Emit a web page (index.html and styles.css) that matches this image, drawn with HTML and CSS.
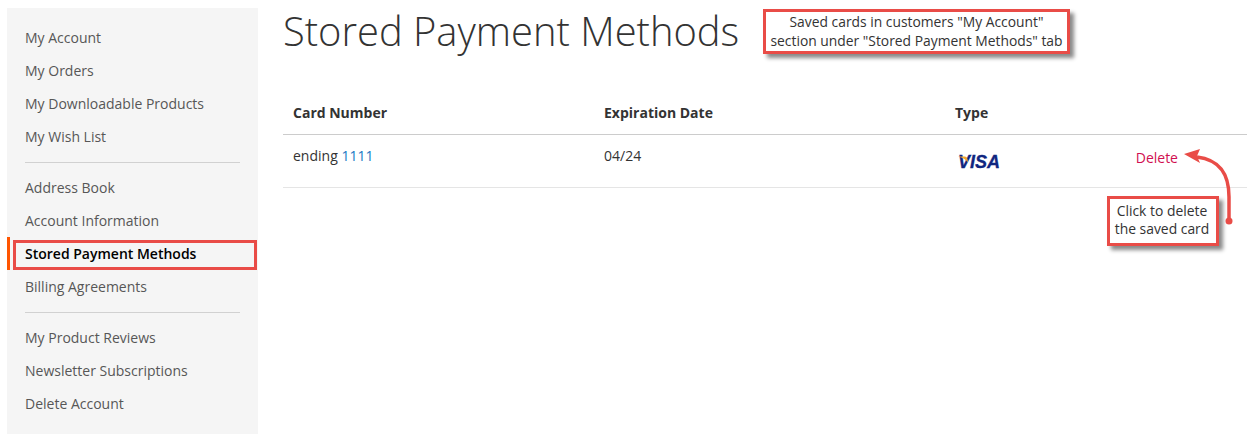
FILE: index.html
```html
<!DOCTYPE html>
<html lang="en">
<head>
  <meta charset="UTF-8" />
  <title>Stored Payment Methods</title>
  <link rel="stylesheet" href="styles.css">
</head>
<body>
  <div class="page">

    <!-- Menu cuenta -->
    <nav class="sidebar">
      <a class="side-link">My Account</a>
      <a class="side-link">My Orders</a>
      <a class="side-link">My Downloadable Products</a>
      <a class="side-link">My Wish List</a>
      <div class="side-divider"></div>
      <a class="side-link">Address Book</a>
      <a class="side-link">Account Information</a>
      <a class="side-link side-current">Stored Payment Methods</a>
      <a class="side-link">Billing Agreements</a>
      <div class="side-divider"></div>
      <a class="side-link">My Product Reviews</a>
      <a class="side-link">Newsletter Subscriptions</a>
      <a class="side-link">Delete Account</a>
    </nav>

    <!-- Contenido -->
    <main class="main">
      <h1 class="page-title">Stored Payment Methods</h1>
      <div class="cards-table">
        <div class="cards-row cards-head">
          <div>Card Number</div>
          <div>Expiration Date</div>
          <div>Type</div>
          <div></div>
        </div>
        <div class="cards-row cards-body">
          <div>ending <span class="card-digits">1111</span></div>
          <div>04/24</div>
          <div class="visa">
            <svg class="visa-flash" width="10" height="7" viewBox="0 0 10 7"><path d="M0 0.5H7Q9 0.5 9.5 3L10 6.5Q7 2 0 0.5Z" fill="#f2a72e"/></svg>
            <span class="visa-text">VISA</span>
          </div>
          <div class="card-actions"><a class="delete-link">Delete</a></div>
        </div>
      </div>
    </main>
  </div>

  <!-- Anotaciones -->
  <div class="note note-saved">Saved cards in customers "My Account"<br>section under "Stored Payment Methods" tab</div>
  <div class="note note-delete">Click to delete<br>the saved card</div>
  <div class="mark-current"></div>
  <svg class="arrow" width="60" height="85" viewBox="0 0 60 85">
    <path d="M46 76V52C46 30 38 15 14 12" fill="none" stroke="#e94c47" stroke-width="3.5"/>
    <path d="M1 9L17 4L14 11L17 18Z" fill="#e94c47"/>
    <circle cx="46" cy="76" r="3.5" fill="#e94c47"/>
  </svg>
</body>
</html>
```

FILE: styles.css
```css
body {
  margin: 0;
  font-family: "Open Sans", sans-serif;
  font-size: 14px;
  color: #333;
  background: #fff;
}

.page {
  display: flex;
  gap: 25px;
  padding: 8px 6px 6px 7px;
  height: 426px;
}

.sidebar {
  width: 251px;
  flex: none;
  box-sizing: border-box;
  padding: 13px 18px 0;
  background: #f5f5f5;
}

.side-link {
  display: block;
  height: 33px;
  line-height: 33px;
  color: #575757;
}

.side-current {
  margin-left: -18px;
  padding-left: 15px;
  border-left: 3px solid #ff5501;
  color: #000;
  font-weight: 600;
}

.side-divider {
  height: 1px;
  margin: 9px 0 8px;
  background: #d1d1d1;
}

.main {
  flex: 1;
}

.page-title {
  margin: 0;
  font-size: 39.9px;
  font-weight: 300;
  line-height: 46px;
}

.cards-table {
  margin-top: 46px;
}

.cards-row {
  display: grid;
  grid-template-columns: 311px 351px 160px 1fr;
  padding: 0 10px;
}

.cards-head {
  height: 34px;
  line-height: 26px;
  font-weight: 700;
  border-bottom: 1px solid #ccc;
}

.cards-body {
  height: 52px;
  line-height: 42px;
  border-bottom: 1px solid #e5e5e5;
}

.card-digits {
  color: #1979c3;
}

.visa {
  position: relative;
  padding-left: 3px;
  line-height: 54px;
}

.visa-flash {
  position: absolute;
  top: 21px;
  left: 3px;
}

.visa-text {
  font-family: "Liberation Sans", sans-serif;
  font-size: 18px;
  font-style: italic;
  font-weight: 700;
  -webkit-text-stroke: 0.3px #10267f;
  color: #10267f;
}

.card-actions {
  text-align: right;
  padding-right: 59px;
  line-height: 46px;
}

.delete-link {
  color: #d10f51;
}

.note {
  position: absolute;
  box-sizing: border-box;
  border: 3px solid #e94c47;
  background: #fff;
  box-shadow: 4px 4px 4px #8a8a8a;
  line-height: 19px;
  color: #333;
  text-align: center;
}

.note-saved {
  left: 763px;
  top: 9px;
  width: 307px;
  height: 45px;
  font-size: 13.85px;
}

.note-delete {
  left: 1107px;
  top: 196px;
  width: 112px;
  height: 50px;
  padding: 3px 2px 0 0;
  font-size: 13.9px;
  line-height: 18px;
}

.mark-current {
  position: absolute;
  left: 13px;
  top: 240px;
  width: 238px;
  height: 24px;
  border: 3px solid #e94c47;
}

.arrow {
  position: absolute;
  left: 1183px;
  top: 145px;
}
```
